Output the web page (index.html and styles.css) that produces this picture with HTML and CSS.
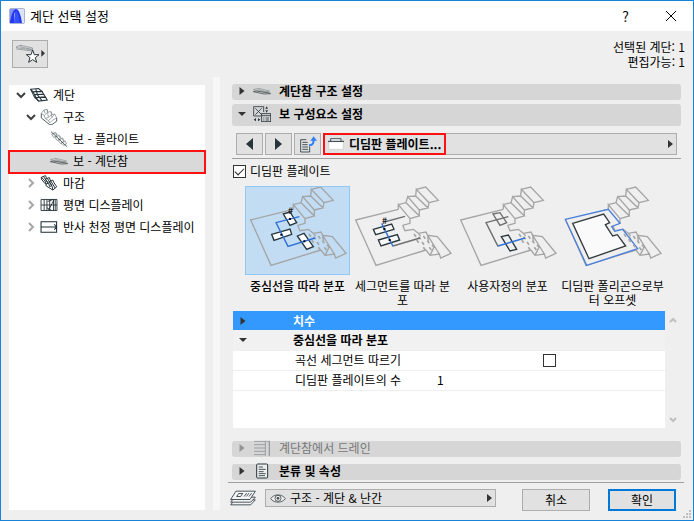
FILE: index.html
```html
<!DOCTYPE html>
<html lang="ko">
<head>
    <meta charset="UTF-8">
    <meta name="viewport" content="width=device-width, initial-scale=1.0">
    <title>계단 선택 설정</title>
    <link rel="stylesheet" href="styles.css">
</head>
<body>

<!-- Shared shapes -->
<svg class="defs" width="0" height="0" aria-hidden="true">
    <symbol id="arrow-right" viewBox="0 0 5 8"><path d="M0 0L5 4L0 8Z" fill="#333"/></symbol>
    <symbol id="arrow-down" viewBox="0 0 8 5"><path d="M0 0.5H8L4 4.5Z" fill="#333"/></symbol>
    <symbol id="chevron-down" viewBox="0 0 10 10"><path d="M1 3L5 7L9 3" fill="none" stroke="#404040" stroke-width="2"/></symbol>
    <symbol id="chevron-right" viewBox="0 0 10 10"><path d="M3 1L7 5L3 9" fill="none" stroke="#a6a6a6" stroke-width="2"/></symbol>
    <symbol id="landing" viewBox="0 0 54 24">
        <path d="M1 8L17 4L50 12L36 15ZM17 4V8L48 16" fill="none" stroke="#8a8f91" stroke-width="2"/>
        <path d="M1 14L10 12L53 19M1 14L34 21L53 20" fill="none" stroke="#4b5356" stroke-width="2.5"/>
    </symbol>
    <symbol id="plate" viewBox="0 0 315 267">
        <path d="M145 70L17 102L78 238L228 192"/>
        <path d="M158 118L180 112V98L145 56V70M145 56L168 50L208 90L180 98M168 50L173 32L208 72V90M173 32L197 30L234 66L208 72M197 30L199 10L237 50L234 66M199 10L227 3L265 43L237 50"/>
        <path d="M158 118L165 134L190 130L205 142L228 138L233 148L262 152L303 202L272 216L268 204L240 208L228 192M205 142L212 150M233 148L268 204M262 152L233 148L235 166M253 182L240 208"/>
        <path d="M192 144L198 152M206 152L212 160M220 150L226 158M200 162L206 170M216 168L222 176M232 164L238 172M220 184L226 192M238 184L244 192M246 176L252 184" stroke-width="5"/>
    </symbol>
</svg>

<div class="window">
    <header class="titlebar">
        <svg class="logo" viewBox="0 0 16 16">
            <rect x="0.5" y="0.5" width="15" height="15" rx="1" fill="#dfe3f6" stroke="#aab2d8"/>
            <path d="M1 15V9C2 4 4 1 7 1C10 1 12 8 13 15H9C8 10 7 6 6 4C5 6 5 11 5 15Z" fill="#2437f0"/>
            <path d="M1 1H6C3 4 2 9 1 14Z" fill="#7f93f0"/>
            <path d="M7 2C9 4 10 10 11 15H5C5 10 6 5 7 2Z" fill="#3450ff"/>
        </svg>
        <h1>계단 선택 설정</h1>
        <button type="button" class="title-button">?</button>
        <button type="button" class="title-button" aria-label="닫기">
            <svg width="10" height="10" viewBox="0 0 10 10"><path d="M0 0L10 10M10 0L0 10" stroke="#000" fill="none"/></svg>
        </button>
    </header>

    <div class="info-bar">
        <button type="button" class="favorite" aria-label="즐겨찾기">
            <svg width="29" height="20" viewBox="0 0 87 60">
                <path d="M1 8L14 4L50 12L49 18L1 11ZM1 15L49 21M14 4V9L49 16" fill="none" stroke="#7c8588" stroke-width="2"/>
                <path d="M50 18L55 32L69 32L58 41L62 55L50 47L38 55L42 41L31 32L45 32Z" fill="#fff" stroke="#273940" stroke-width="3"/>
                <path d="M76 18L87 28L76 38Z" fill="#333"/>
            </svg>
        </button>
        <p class="counts">선택된 계단: 1<br>편집가능: 1</p>
    </div>

    <main class="content">
        <nav class="tree">
            <a href="#stair" class="node level-1">
                <svg class="chevron"><use href="#chevron-down"/></svg>
                <svg class="node-icon" viewBox="0 0 50 38">
                    <g fill="#fff" stroke="#26363c" stroke-width="3">
                        <path d="M2 3L24 1L33 9L9 11Z"/>
                        <path d="M9 10L33 9L38 17L13 19Z"/>
                        <path d="M13 18L38 17L43 25L17 27Z"/>
                        <path d="M17 26L43 25L48 33L24 36Z"/>
                        <path d="M2 3L9 18L13 26L24 36M16 3L21 19L33 34" fill="none"/>
                    </g>
                </svg>
                계단
            </a>
            <a href="#structure" class="node level-2">
                <svg class="chevron"><use href="#chevron-down"/></svg>
                <svg class="node-icon" viewBox="0 0 52 50">
                    <path d="M2 14L10 3L20 1L22 10L32 8L35 17L44 16L50 28V38L35 49H28L2 28Z" fill="#fff"/>
                    <path d="M2 14V28L28 49H35L50 38V28" fill="none" stroke="#26363c" stroke-width="2.5"/>
                    <path d="M2 14L10 3L20 1L22 10L32 8L35 17L44 16L50 28L37 35M2 14L11 20L22 10M11 20L14 30L24 26L35 17M14 30L25 36L35 26L44 16M25 36L28 44L37 35M10 3L14 14M20 1L24 26M32 8L35 26" fill="none" stroke="#7b8588" stroke-width="2.2"/>
                </svg>
                구조
            </a>
            <a href="#beam-flight" class="node level-3">
                <svg class="node-icon" viewBox="0 0 54 52">
                    <path d="M3 10L17 5L20 15L10 21ZM14 21L28 14L32 24L21 31ZM25 31L39 23L43 34L32 41ZM34 40L47 32L51 42L43 47Z" fill="none" stroke="#7b8588" stroke-width="2.5"/>
                    <path d="M1 2L53 51" stroke="#26363c" stroke-width="2.5" fill="none"/>
                    <path d="M9 2L20 15M20 8L32 24M31 17L43 34" stroke="#8f989a" stroke-width="2" fill="none"/>
                </svg>
                보 - 플라이트
            </a>
            <a href="#beam-landing" class="node level-3 selected">
                <svg class="node-icon"><use href="#landing"/></svg>
                보 - 계단참
            </a>
            <a href="#finish" class="node level-2">
                <svg class="chevron"><use href="#chevron-right"/></svg>
                <svg class="node-icon" viewBox="0 0 52 50">
                    <g fill="#fff" stroke="#1e2d33" stroke-width="3">
                        <path d="M2 7L15 2L18 9L30 24L17 28L14 19Z"/>
                        <path d="M14 13L27 8L30 16L40 31L28 36L25 27Z"/>
                        <path d="M26 21L38 16L41 23L50 37L38 47L36 36Z"/>
                        <path d="M2 7V13L14 27L17 28V34L38 47M9 5L24 26M21 11L35 33M32 19L45 41" fill="none"/>
                    </g>
                </svg>
                마감
            </a>
            <a href="#plan" class="node level-2">
                <svg class="chevron"><use href="#chevron-right"/></svg>
                <svg class="node-icon" viewBox="0 0 52 36">
                    <path d="M3 2H49V34H3ZM3 18H49M12 2V34M20 2V34M28 2V34M39 2V34M44 2V34M22 8L38 2M24 34L40 4M20 26L34 34" fill="#fff" stroke="#1e2d33" stroke-width="2.5"/>
                </svg>
                평면 디스플레이
            </a>
            <a href="#ceiling" class="node level-2">
                <svg class="chevron"><use href="#chevron-right"/></svg>
                <svg class="node-icon" viewBox="0 0 52 36">
                    <path d="M3 3H48V33H3ZM3 18H48M41 10L48 18L41 26" fill="#fff" stroke="#1e2d33" stroke-width="3"/>
                </svg>
                반사 천정 평면 디스플레이
            </a>
        </nav>

        <div class="splitter"></div>

        <section class="settings">
            <div class="panels">
                <button type="button" class="panel-header">
                    <svg class="expander"><use href="#arrow-right"/></svg>
                    <svg class="panel-icon"><use href="#landing"/></svg>
                    계단참 구조 설정
                </button>
                <button type="button" class="panel-header open">
                    <svg class="expander"><use href="#arrow-down"/></svg>
                    <svg class="panel-icon" viewBox="0 0 54 48">
                        <g fill="none" stroke="#26363c" stroke-width="2.5">
                            <path d="M25 30H2V2H32V18M7 7L26 26M26 7L7 26"/>
                            <rect x="26" y="23" width="27" height="24"/>
                            <path d="M26 29H53M31 36H34M38 36H48M31 42H34M38 42H48"/>
                        </g>
                        <path d="M37 8L41 1L45 8ZM37 13L41 20L45 13ZM9 36L2 41L9 46ZM15 36L22 41L15 46Z" fill="#26363c"/>
                    </svg>
                    보 구성요소 설정
                </button>

                <div class="toolbar">
                    <button type="button" class="tool" aria-label="이전"><svg width="7" height="12" viewBox="0 0 7 12"><path d="M7 0V12L0 6Z" fill="#26363c"/></svg></button>
                    <button type="button" class="tool" aria-label="다음"><svg width="7" height="12" viewBox="0 0 7 12"><path d="M0 0V12L7 6Z" fill="#26363c"/></svg></button>
                    <button type="button" class="tool" aria-label="페이지 이동">
                        <svg width="18" height="17" viewBox="0 0 54 51">
                            <path d="M22 11H5V48H32V31M10 19H26M10 26H26M10 33H27M10 40H27" fill="none" stroke="#26363c" stroke-width="2.5"/>
                            <path d="M30 28C43 28 44 20 44 8" fill="none" stroke="#2f80f5" stroke-width="6"/>
                            <path d="M34 14L44 1L54 14Z" fill="#2f80f5"/>
                        </svg>
                    </button>
                    <div class="page-combo">
                        <div class="marked">
                            <svg width="16" height="12" viewBox="0 0 48 36">
                                <path d="M2 11H46V34H2Z" fill="#fff" stroke="#c6c6c6" stroke-width="2"/>
                                <path d="M8 9V2H39V9" fill="#f4f4f4" stroke="#26363c" stroke-width="2.5"/>
                                <path d="M0 10H48" stroke="#26363c" stroke-width="3"/>
                            </svg>
                            <select aria-label="페이지"><option>디딤판 플레이트...</option></select>
                        </div>
                        <svg class="combo-arrow"><use href="#arrow-right"/></svg>
                    </div>
                </div>

                <label class="check-line"><input type="checkbox" class="check" checked>디딤판 플레이트</label>

                <div class="methods">
                    <button type="button" class="method active">
                        <svg class="drawing" viewBox="0 0 315 267">
                            <use href="#plate"/>
                            <g fill="#fff" stroke="#26363c"><path d="M115 84L135 78L155 110L135 118ZM80 145L135 129L140 145L87 163ZM157 150L177 142L205 182L185 190Z"/></g>
                            <path d="M163 92L93 110L129 181L210 156" stroke="#2f70d8"/>
                            <path d="M132 99H138M106 146H112M175 166H181" stroke="#000" stroke-width="6"/>
                            <text x="137" y="84">#</text>
                        </svg>
                        <span>중심선을 따라 분포</span>
                    </button>
                    <button type="button" class="method">
                        <svg class="drawing" viewBox="0 0 315 267">
                            <use href="#plate"/>
                            <g fill="#f8f8f8" stroke="#26363c"><path d="M70 130L125 114L132 130L77 146ZM85 162L142 146L149 162L93 180Z"/></g>
                            <path d="M103 108L165 91M129 180L210 156" stroke="#707070"/>
                            <path d="M95 112L129 181" stroke="#2f70d8"/>
                            <path d="M100 129H106M116 162H122" stroke="#000" stroke-width="6"/>
                            <text x="104" y="115">#</text>
                        </svg>
                        <span>세그먼트를 따라 분포</span>
                    </button>
                    <button type="button" class="method">
                        <svg class="drawing" viewBox="0 0 315 267">
                            <use href="#plate"/>
                            <path d="M160 92L93 110L129 181M114 84L135 80L155 110L135 118Z" stroke="#6c6c6c"/>
                            <path d="M139 152L160 147L185 190L165 195Z" stroke="#26363c"/>
                            <path d="M129 180L210 156" stroke="#2f70d8"/>
                        </svg>
                        <span>사용자정의 분포</span>
                    </button>
                    <button type="button" class="method">
                        <svg class="drawing" viewBox="0 0 315 267">
                            <use href="#plate"/>
                            <path d="M16 100L145 70L180 112L155 122L164 136L188 130L233 188L80 238Z" fill="#efefef" stroke="#4a80dc"/>
                            <path d="M38 112L131 84L149 110L136 116L158 150L172 146L197 180L87 218Z" fill="#fafafa" stroke="#333b3e"/>
                            <path d="M192 144L198 152M206 160L212 168M220 176L226 184" stroke-width="5"/>
                        </svg>
                        <span>디딤판 폴리곤으로부터 오프셋</span>
                    </button>
                </div>

                <div class="parameters">
                    <div class="table-area">
                        <table>
                            <colgroup>
                                <col class="col-toggle">
                                <col class="col-name">
                                <col>
                            </colgroup>
                            <tbody>
                                <tr class="group current">
                                    <td class="toggle"><svg class="expander"><use href="#arrow-right"/></svg></td>
                                    <th colspan="2">치수</th>
                                </tr>
                                <tr class="group">
                                    <td class="toggle"><svg class="expander"><use href="#arrow-down"/></svg></td>
                                    <th colspan="2">중심선을 따라 분포</th>
                                </tr>
                                <tr>
                                    <td class="toggle"></td>
                                    <td class="name"><label for="follow-curve">곡선 세그먼트 따르기</label></td>
                                    <td class="flag"><input type="checkbox" class="check" id="follow-curve"></td>
                                </tr>
                                <tr>
                                    <td class="toggle"></td>
                                    <td class="name">디딤판 플레이트의 수</td>
                                    <td>1</td>
                                </tr>
                            </tbody>
                        </table>
                    </div>
                    <div class="scroll">
                        <svg width="8" height="6" viewBox="0 0 8 6"><path d="M1 5L4 2L7 5" fill="none" stroke="#bfbfbf" stroke-width="2"/></svg>
                        <svg width="8" height="6" viewBox="0 0 8 6"><path d="M1 1L4 4L7 1" fill="none" stroke="#bfbfbf" stroke-width="2"/></svg>
                    </div>
                </div>

                <button type="button" class="panel-header" disabled>
                    <svg class="expander"><use href="#arrow-right"/></svg>
                    <svg class="panel-icon" viewBox="0 0 54 48">
                        <path d="M3 4H37M3 14H37M3 24H37M3 34H37M3 44H37M37 2V47M40 4H49V47M49 2V47" fill="none" stroke="#26363c" stroke-width="2.5"/>
                    </svg>
                    계단참에서 드레인
                </button>
                <button type="button" class="panel-header">
                    <svg class="expander"><use href="#arrow-right"/></svg>
                    <svg class="panel-icon" viewBox="0 0 54 48">
                        <rect x="11" y="3" width="33" height="42" rx="3" fill="#eee" stroke="#26363c" stroke-width="3"/>
                        <path d="M17 12H30M17 19H38M17 26H32M17 32H38M17 38H36" stroke="#26363c" stroke-width="2.5"/>
                    </svg>
                    분류 및 속성
                </button>
            </div>

            <footer class="footer">
                <svg class="layers" viewBox="0 0 78 45">
                    <g fill="#f4f4f4" stroke="#26363c" stroke-width="2.5">
                        <path d="M2 43L14 28H76L62 43Z"/>
                        <path d="M2 35L14 20H76L62 35Z"/>
                        <path d="M2 27L18 2H76L60 27Z"/>
                        <path d="M20 18L26 9H38L32 18ZM42 18L50 8M49 18L57 8M57 18L65 8" fill="none"/>
                    </g>
                </svg>
                <div class="layer-combo">
                    <svg width="16" height="11" viewBox="0 0 48 33">
                        <path d="M2 17C12 2 36 2 46 17C36 31 12 31 2 17Z" fill="#efefef" stroke="#424b4e" stroke-width="2.5"/>
                        <circle cx="24" cy="16" r="9" fill="none" stroke="#424b4e" stroke-width="2.5"/>
                        <circle cx="24" cy="16" r="4" fill="#424b4e"/>
                    </svg>
                    <select aria-label="레이어"><option>구조 - 계단 &amp; 난간</option></select>
                    <svg class="combo-arrow"><use href="#arrow-right"/></svg>
                </div>
                <button type="button" class="action">취소</button>
                <button type="submit" class="action primary">확인</button>
            </footer>
        </section>
    </main>
    <svg class="grip" viewBox="0 0 8 8"><path d="M6 0h2v2h-2zM3 3h2v2h-2zM6 3h2v2h-2zM0 6h2v2h-2zM3 6h2v2h-2zM6 6h2v2h-2z" fill="#bfbfbf"/></svg>
</div>

</body>
</html>
```

FILE: styles.css
```css
* {
    box-sizing: border-box;
}

body {
    margin: 0;
    font-family: "Noto Sans CJK KR", sans-serif;
    font-size: 12px;
    line-height: 16px;
    color: #000;
}

button,
select {
    font: inherit;
    color: inherit;
}

svg {
    flex: none;
}

.defs {
    position: absolute;
}

.window {
    position: relative;
    display: flex;
    flex-direction: column;
    min-height: 100vh;
    background-color: #efefef;
    border: 1px solid #1883d7;
}

/* Title bar */
.titlebar {
    display: flex;
    align-items: center;
    height: 30px;
    padding-left: 8px;
    background-color: #fff;
}

.logo {
    width: 16px;
    height: 16px;
}

h1 {
    flex: 1;
    margin: 0 0 0 5px;
    font-size: 13px;
    font-weight: normal;
}

.title-button {
    display: flex;
    align-items: center;
    justify-content: center;
    width: 45px;
    height: 28px;
    padding: 0;
    background: none;
    border: none;
    font-size: 14px;
}

.info-bar {
    display: flex;
    justify-content: space-between;
    align-items: flex-start;
    height: 46px;
    padding: 8px 8px 0 11px;
}

.favorite {
    display: flex;
    align-items: center;
    justify-content: center;
    width: 36px;
    height: 28px;
    margin-top: 1px;
    padding: 0;
    background-color: #e1e1e1;
    border: 1px solid #adadad;
}

.counts {
    margin: 0;
    line-height: 15px;
    text-align: right;
}

.content {
    flex: 1;
    display: flex;
    padding-left: 8px;
}

/* Tree */
.tree {
    width: 196px;
    margin: 8px 8px 10px 0;
    background-color: #fff;
}

.node {
    display: flex;
    align-items: center;
    height: 22px;
    padding-bottom: 2px;
    color: #000;
    text-decoration: none;
    white-space: nowrap;
}

.level-1 {
    padding-left: 7px;
}

.level-2 {
    padding-left: 17px;
}

.level-3 {
    padding-left: 41px;
}

.selected {
    background-color: #d9d9d9;
    outline: 2px solid #f11;
    outline-offset: -1px;
}

.chevron {
    width: 10px;
    height: 10px;
    margin-right: 4px;
}

.node-icon {
    width: 18px;
    height: 16px;
    margin-right: 5px;
}

.splitter {
    width: 7px;
    margin-bottom: 10px;
    background-color: #f7f7f7;
}

/* Settings */
.settings {
    flex: 1;
    display: flex;
    flex-direction: column;
    padding: 7px 9px 0 8px;
}

.panels {
    flex: 1;
    display: flex;
    flex-direction: column;
    padding: 0 3px 2px 4px;
}

.panel-header {
    display: flex;
    align-items: center;
    height: 16px;
    padding: 0 6px 2px;
    background-color: #d6d6d6;
    border: none;
    border-radius: 3px;
    font-weight: bold;
}

.panel-header.open {
    height: 22px;
    margin-top: 4px;
}

.expander {
    display: block;
    width: 8px;
    height: 8px;
}

.panel-icon {
    width: 18px;
    height: 16px;
    margin: 0 8px 0 7px;
}

.panel-header:disabled {
    margin: 13px 0 7px;
    font-weight: normal;
    color: #777;
}

.panel-header:disabled svg {
    opacity: 0.4;
}

.toolbar {
    display: flex;
    gap: 2px;
    padding: 7px 4px 3px;
    border-bottom: 1px solid #a0a0a0;
}

.tool {
    display: flex;
    align-items: center;
    justify-content: center;
    width: 27px;
    height: 22px;
    padding: 0;
    background-color: #e1e1e1;
    border: 1px solid #adadad;
}

.page-combo,
.layer-combo {
    flex: 1;
    display: flex;
    align-items: center;
    justify-content: space-between;
    background-color: #e1e1e1;
    border: 1px solid #adadad;
}

.page-combo {
    height: 22px;
}

.marked {
    display: flex;
    align-items: center;
    gap: 5px;
    height: 22px;
    margin-left: -1px;
    padding: 0 3px;
    border: 2px solid #f11;
}

select {
    appearance: none;
    padding: 0;
    background: none;
    border: none;
}

.marked select {
    font-weight: bold;
}

.combo-arrow {
    width: 5px;
    height: 8px;
    margin-right: 3px;
}

.check {
    appearance: none;
    flex: none;
    width: 13px;
    height: 13px;
    margin: 0;
    background-color: #fff;
    border: 1px solid #333;
}

.check:checked::before {
    content: "";
    display: block;
    width: 8px;
    height: 4px;
    margin: 2px 0 0 1px;
    border: solid #222;
    border-width: 0 0 1px 1px;
    transform: rotate(-45deg);
}

.check-line {
    display: flex;
    align-items: center;
    gap: 4px;
    height: 16px;
    margin: 4px 1px 7px;
}

/* Distribution methods */
.methods {
    display: grid;
    grid-template-columns: repeat(4, 105px);
    height: 125px;
    padding-left: 13px;
}

.method {
    display: flex;
    flex-direction: column;
    padding: 0;
    background: none;
    border: none;
}

.method span {
    width: 100%;
    padding: 4px 1px 0;
    line-height: 14px;
    word-break: break-all;
}

.method.active span {
    font-weight: 500;
    white-space: nowrap;
}

.drawing {
    width: 105px;
    height: 89px;
    fill: none;
    stroke: #a5a5a5;
    stroke-width: 4;
}

.active .drawing {
    background-color: #c1dcf3;
    outline: 1px solid #90c8f6;
    outline-offset: -1px;
}

.drawing text {
    font-size: 26px;
    font-weight: bold;
    text-anchor: middle;
    fill: #222;
    stroke: none;
}

/* Parameter list */
.parameters {
    flex: 1;
    display: flex;
    padding-left: 1px;
}

.table-area {
    flex: 1;
    background-color: #fff;
}

table {
    width: 100%;
    border-collapse: collapse;
    table-layout: fixed;
}

.col-toggle {
    width: 60px;
}

.col-name {
    width: 144px;
}

td,
th {
    height: 20px;
    padding: 0;
    border-bottom: 1px solid #efefef;
    line-height: 16px;
    text-align: left;
}

.group {
    background-color: #f1f1f1;
}

.group.current {
    background-color: #39f;
    color: #fff;
}

.current td,
.current th {
    height: 19px;
    border-bottom: none;
}

.toggle {
    padding-left: 6px;
}

.name {
    padding-left: 2px;
}

.flag {
    padding-right: 4px;
}

.flag .check {
    display: block;
    margin: 0 auto;
}

.scroll {
    display: flex;
    flex-direction: column;
    align-items: center;
    justify-content: space-between;
    width: 16px;
    padding: 6px 0 5px;
}

/* Footer */
.footer {
    display: flex;
    align-items: flex-start;
    height: 38px;
    padding: 6px 8px 0 2px;
    border-top: 1px solid #a0a0a0;
}

.layers {
    width: 26px;
    height: 16px;
    margin: 1px 9px 0 0;
}

.layer-combo {
    height: 18px;
    margin-right: 8px;
    padding-left: 4px;
}

.layer-combo select {
    flex: 1;
    margin-left: 4px;
}

.action {
    width: 68px;
    height: 22px;
    margin-left: 18px;
    padding: 0;
    background-color: #e1e1e1;
    border: 1px solid #adadad;
}

.action.primary {
    border: 2px solid #0078d7;
}

.grip {
    position: absolute;
    right: 2px;
    bottom: 2px;
    width: 8px;
    height: 8px;
}
```
